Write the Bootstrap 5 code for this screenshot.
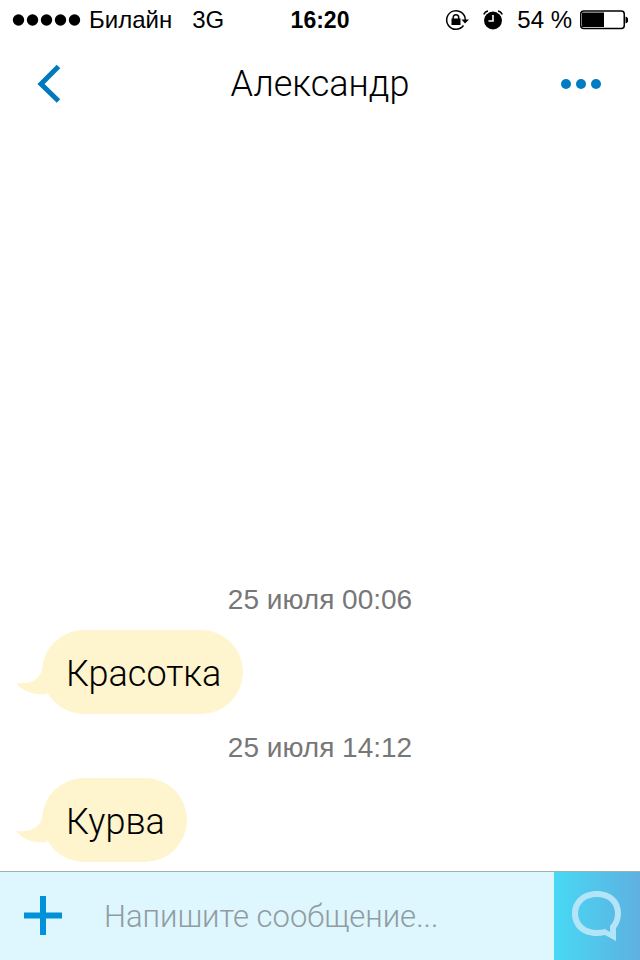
<!DOCTYPE html>
<html lang="ru">
<head>
<meta charset="utf-8">
<meta name="viewport" content="width=device-width, initial-scale=1">
<title>Александр</title>
<link href="https://cdn.jsdelivr.net/npm/bootstrap@5.3.0/dist/css/bootstrap.min.css" rel="stylesheet">
<style>
  body { font-family: "Liberation Sans", Arial, sans-serif; color: #000; background: #fff; }
  button svg, .status svg { display: block; }
  .status { height: 40px; padding: 0 12px; font-size: 24px; line-height: 40px; }
  .status .side { flex: 1 1 0; }
  .signal { margin-right: 8px; }
  .network { margin-left: 20px; }
  .status-icons { gap: 14px; margin-right: 14px; }
  .clock { font-size: 23px; font-weight: 700; }
  .title-bar { height: 88px; padding: 0 24px; }
  .title-bar h1 { font-family: Roboto, sans-serif; font-weight: 300; font-size: 36px; line-height: 40px; }
  .icon-btn { width: 50px; height: 50px; padding: 0; border: 0; border-radius: 0; }
  .stamp { font-size: 28px; line-height: 32px; color: #777; margin-bottom: 14px; }
  .bubble { position: relative; align-self: flex-start; margin: 0 24px 18px 42px; padding: 22px 22px 18px 24px; border-radius: 42px; background: #fef4cd; font-family: Roboto, sans-serif; font-weight: 300; font-size: 36px; line-height: 44px; }
  .bubble svg { position: absolute; left: -26px; bottom: 18px; }
  .chat .bubble:last-child { margin-bottom: 9px; }
  .composer { height: 89px; border-top: 1px solid #9fb0b5; background: #def6fe; }
  .add { width: 86px; }
  .composer input, .composer input:focus { font-family: Roboto, sans-serif; font-weight: 300; font-size: 31px; line-height: 40px; padding: 2px 18px 0; background: transparent; }
  .composer input::placeholder { color: #919ca1; opacity: 1; }
  .send { width: 86px; background: linear-gradient(90deg, #47d9f3, #5fb0e0); }
  .composer .btn { padding: 0; border: 0; border-radius: 0; }
</style>
</head>
<body>
<div class="d-flex flex-column vh-100">
  <header>
    <div class="status d-flex align-items-center">
      <div class="side d-flex align-items-center">
        <svg class="signal" width="69" height="14" viewBox="0 0 69 14" aria-hidden="true"><circle cx="6.500" cy="7" r="5.700"/><circle cx="20.500" cy="7" r="5.700"/><circle cx="34.500" cy="7" r="5.700"/><circle cx="48.500" cy="7" r="5.700"/><circle cx="62.500" cy="7" r="5.700"/></svg>
        <span>Билайн</span><span class="network">3G</span>
      </div>
      <span class="clock">16:20</span>
      <div class="side d-flex align-items-center justify-content-end">
        <div class="status-icons d-flex align-items-center">
          <svg width="24" height="22" viewBox="0 0 24 22" aria-hidden="true"><path d="M18.500 16.500A9.300 9.300 0 1 1 20.300 11" fill="none" stroke="#000" stroke-width="1.500"/><path d="M16.500 10.500h7.500l-4 4z"/><rect x="6.500" y="9.500" width="9" height="6.500"/><path d="M8.200 10V8.500a2.700 2.700 0 0 1 5.500 0V10" fill="none" stroke="#000" stroke-width="1.500"/></svg>
          <svg width="20" height="20" viewBox="0 0 20 20" aria-hidden="true"><circle cx="10" cy="10.500" r="9"/><path d="M.8 4.500Q2 1.500 5 1M15 1q3 .5 4.200 3.500" fill="none" stroke="#fff" stroke-width="4"/><path d="M.8 4.500Q2 1.500 5 1M15 1q3 .5 4.200 3.500" fill="none" stroke="#000" stroke-width="1.500"/><path d="M10 5v6H5.500" fill="none" stroke="#fff" stroke-width="1.600"/></svg>
        </div>
        <span>54 %</span>
        <svg class="ms-2" width="48" height="20" viewBox="0 0 48 20" aria-hidden="true"><rect x=".75" y="1" width="43.500" height="17.500" rx="3" fill="none" stroke="#000" stroke-width="1.500"/><rect x="2" y="2.500" width="22" height="14.500"/><path d="M45.500 6.500q3 1 3 3.500t-3 3.500z"/></svg>
      </div>
    </div>
    <nav class="title-bar d-flex align-items-center justify-content-between" aria-label="Диалог">
      <button class="btn icon-btn" type="button" aria-label="Назад"><svg width="50" height="50" viewBox="0 0 50 50"><path d="M34.500 7.500 17 25l17.500 17" fill="none" stroke="#0079bd" stroke-width="5"/></svg></button>
      <h1 class="m-0">Александр</h1>
      <button class="btn icon-btn" type="button" aria-label="Ещё"><svg width="50" height="50" viewBox="0 0 50 50" fill="#007cc2" overflow="visible"><circle cx="0" cy="25" r="5"/><circle cx="15" cy="25" r="5"/><circle cx="30" cy="25" r="5"/></svg></button>
    </nav>
  </header>
  <main class="chat flex-grow-1 d-flex flex-column justify-content-end">
    <div class="stamp text-center">25 июля 00:06</div>
    <div class="bubble">Красотка<svg width="36" height="26" viewBox="0 0 36 26" fill="#fef4cd" aria-hidden="true"><path d="M26 0Q22 15 0 13q10 13 31 11L36 0z"/></svg></div>
    <div class="stamp text-center">25 июля 14:12</div>
    <div class="bubble">Курва<svg width="36" height="26" viewBox="0 0 36 26" fill="#fef4cd" aria-hidden="true"><path d="M26 0Q22 15 0 13q10 13 31 11L36 0z"/></svg></div>
  </main>
  <form class="composer d-flex align-items-stretch">
    <button class="btn add flex-shrink-0 d-flex align-items-center justify-content-center" type="button" aria-label="Прикрепить"><svg width="40" height="40" viewBox="0 0 40 40"><path d="M20 0v39M1 19.500h38" stroke="#0091d8" stroke-width="6"/></svg></button>
    <input class="form-control border-0 rounded-0 shadow-none" type="text" placeholder="Напишите сообщение..." aria-label="Напишите сообщение">
    <button class="btn send flex-shrink-0 d-flex align-items-center justify-content-center" type="submit" aria-label="Отправить"><svg width="50" height="50" viewBox="0 0 50 50"><path fill="#b4e4f8" fill-rule="evenodd" d="M25 0C39 0 49 9 49 22q0 9-5 15v13l-11-6q-4 1-8 1C10 45 0 36 0 22.500S11 0 25 0zM25 6C14 6 6 12.500 6 22.500S14 39 25 39q4 0 8-1l5 3v-6q5-5 5-12.500C43 12.500 36 6 25 6z"/></svg></button>
  </form>
</div>
<script src="https://cdn.jsdelivr.net/npm/bootstrap@5.3.0/dist/js/bootstrap.bundle.min.js"></script>
</body>
</html>
